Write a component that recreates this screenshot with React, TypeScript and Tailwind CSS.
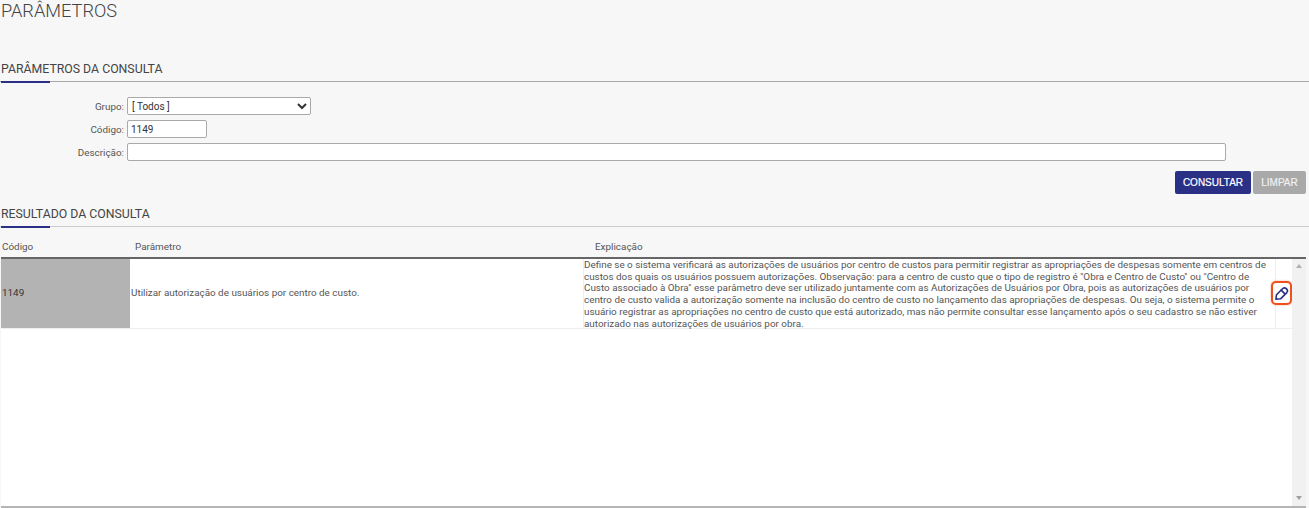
const explanation = [
  'Define se o sistema verificará as autorizações de usuários por centro de custos para permitir registrar as apropriações de despesas somente em centros de',
  'custos dos quais os usuários possuem autorizações. Observação: para a centro de custo que o tipo de registro é "Obra e Centro de Custo" ou "Centro de',
  'Custo associado à Obra" esse parâmetro deve ser utilizado juntamente com as Autorizações de Usuários por Obra, pois as autorizações de usuários por',
  'centro de custo valida a autorização somente na inclusão do centro de custo no lançamento das apropriações de despesas. Ou seja, o sistema permite o',
  'usuário registrar as apropriações no centro de custo que está autorizado, mas não permite consultar esse lançamento após o seu cadastro se não estiver',
  'autorizado nas autorizações de usuários por obra.',
];

function SectionTitle({ title, light }: { title: string; light?: boolean }) {
  return (
    <div className={`relative h-[21px] border-b text-[12.3px] leading-[17px] text-[#444] ${light ? 'border-[#ccc]' : 'border-[#a9a9a9]'}`}>
      <span className="pl-px">{title}</span>
      {/* Underline accent */}
      <div className="absolute left-px bottom-[-2px] h-[2px] w-[49px] bg-[#2b3087]" />
    </div>
  );
}

function Field({ label, children }: { label: string; children: React.ReactNode }) {
  return (
    <div className="flex items-center h-[18px]">
      <label className="w-[124px] pt-[2px] text-right text-[9.9px] text-[#555]">{label}:</label>
      <div className="ml-[3px] flex">{children}</div>
    </div>
  );
}

export default function App() {
  return (
    <div className="h-[508px] w-[1309px] overflow-hidden bg-[#f7f7f7] font-['Roboto',sans-serif]">
      <h1 className="pl-px text-[18.2px] font-light leading-[21px] text-[#444]">PARÂMETROS</h1>

      <div className="mt-[40px]">
        <SectionTitle title="PARÂMETROS DA CONSULTA" />
      </div>

      {/* Filters */}
      <div className="mt-[15px] flex flex-col gap-[5px]">
        <Field label="Grupo">
          <select className="h-[18px] w-[184px] appearance-auto rounded-[2px] border border-[#a9a9a9] bg-white pl-0 text-[10px] text-[#333]">
            <option>[ Todos ]</option>
          </select>
        </Field>
        <Field label="Código">
          <input
            readOnly
            value="1149"
            className="h-[18px] w-[80px] rounded-[2px] border border-[#a9a9a9] bg-white px-[3px] text-[10px] text-[#333]"
          />
        </Field>
        <Field label="Descrição">
          <input
            readOnly
            className="h-[18px] w-[1099px] rounded-[2px] border border-[#a9a9a9] bg-white px-[3px] text-[10px] text-[#333]"
          />
        </Field>
      </div>

      <div className="mt-[10px] flex justify-end gap-[2px] pr-[3px] font-['Liberation_Sans',sans-serif] [-webkit-text-stroke:0.2px]">
        <button className="h-[23px] w-[76px] rounded-[2px] bg-[#2b3087] text-[10px] text-white">
          CONSULTAR
        </button>
        <button className="h-[23px] w-[53px] rounded-[2px] bg-[#a9a9a9] text-[10px] text-[#f0f0f0]">
          LIMPAR
        </button>
      </div>

      <div className="mt-[12px]">
        <SectionTitle title="RESULTADO DA CONSULTA" light />
      </div>

      {/* Results */}
      <div className="mt-[13px] ml-px mr-[3px] flex h-[17px] text-[9.9px] text-[#555] border-b-2 border-[#666] box-content">
        <div className="w-[134px] pl-px">Código</div>
        <div className="w-[460px]">Parâmetro</div>
        <div>Explicação</div>
      </div>

      <div className="ml-px mr-[3px] flex h-[247px] border-b-2 border-[#b5b5b5] bg-white box-content">
        <div className="flex-1">
          <div className="flex h-[69px] border-b border-[#eee] box-content text-[9.9px] text-[#555]">
            <div className="flex w-[129px] items-center bg-[#b3b3b3] pl-px text-[#333]">1149</div>
            <div className="ml-px flex w-[452px] items-center">Utilizar autorização de usuários por centro de custo.</div>
            <div className="w-[692px] border-l border-[#eee] whitespace-nowrap leading-[11.72px]">
              {explanation.map(line => (
                <div key={line}>{line}</div>
              ))}
            </div>
            <div className="relative w-[17px] border-l border-[#eee]">
              <div className="absolute left-[-5px] top-[22px] flex h-[24px] w-[21px] items-center justify-center rounded-[5px] border-2 border-[#f0501e] bg-white shadow-[0_0_2px_rgba(240,80,30,0.5)]">
                <svg viewBox="0 0 24 24" className="h-[15px] w-[15px]" fill="none" stroke="#2b3087" strokeWidth="2.6" strokeLinejoin="round" strokeLinecap="round">
                  <path d="M3 21l1-7 10-10q3-2.5 6 0.5t0.5 6l-10 10z" />
                  <path d="M11.5 6.5l6 6" />
                </svg>
              </div>
            </div>
          </div>
        </div>

        {/* Scrollbar */}
        <div className="relative w-[14px] bg-[#f1f1f1]">
          <div className="absolute left-[4px] top-[5px] h-0 w-0 border-x-[3px] border-b-[4px] border-x-transparent border-b-[#b0b0b0]" />
          <div className="absolute left-[4px] bottom-[6px] h-0 w-0 border-x-[3px] border-t-[4px] border-x-transparent border-t-[#a0a0a0]" />
        </div>
      </div>
    </div>
  );
}
